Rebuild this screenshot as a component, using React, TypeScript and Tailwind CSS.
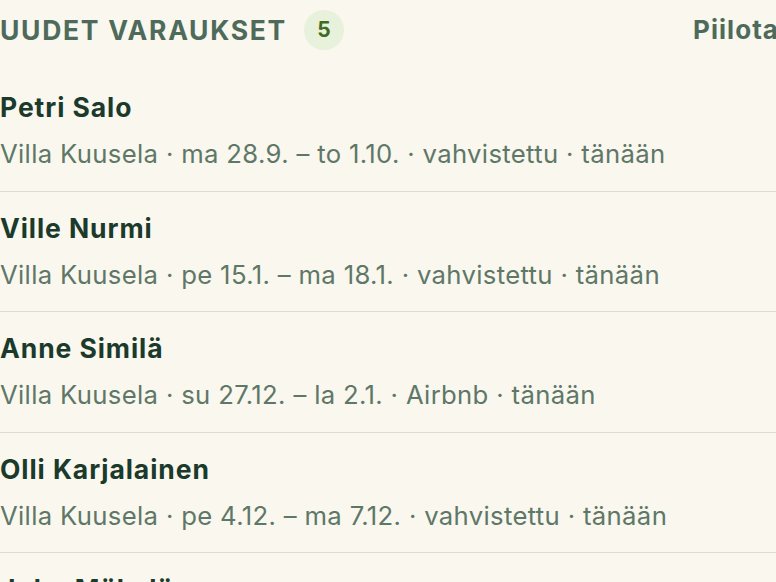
import React from "react";

const rows = [
  { name: "Petri Salo", sub: "Villa Kuusela · ma 28.9. – to 1.10. · vahvistettu · tänään" },
  { name: "Ville Nurmi", sub: "Villa Kuusela · pe 15.1. – ma 18.1. · vahvistettu · tänään" },
  { name: "Anne Similä", sub: "Villa Kuusela · su 27.12. – la 2.1. · Airbnb · tänään" },
  { name: "Olli Karjalainen", sub: "Villa Kuusela · pe 4.12. – ma 7.12. · vahvistettu · tänään" },
  { name: "Juha Mäkelä", sub: "Villa Kuusela · ke 11.11. – su 15.11. · vahvistettu · tänään" },
];

export default function App() {
  return (
    <div className="w-[776px] h-[582px] overflow-hidden bg-[#f9f7ee] font-['Inter',sans-serif]">
      <div className="flex items-center justify-between w-[779px] h-[60px]">
        <div className="flex items-center gap-[17px]">
          <span className="text-[26.5px] font-bold tracking-[0.064em] text-[#4e6a5a] leading-none">UUDET VARAUKSET</span>
          <span className="w-[40px] h-[40px] rounded-full bg-[#e8f1dc] flex items-center justify-center text-[21px] font-bold text-[#3f6b1f]">5</span>
        </div>
        <span className="text-[26px] font-bold tracking-[0.04em] text-[#4e6a5a] leading-none">Piilota</span>
      </div>
      <div className="mt-[11px]">
        {rows.map((r) => (
          <div key={r.name} className="pt-[20px] pb-[21.5px] border-b border-[#dedccf]">
            <div className="text-[26.5px] leading-[32px] font-bold tracking-[0.035em] text-[#1b3a2b]">{r.name}</div>
            <div className="mt-[16px] text-[25.7px] leading-[30px] tracking-[0.013em] text-[#5f7768]">{r.sub}</div>
          </div>
        ))}
      </div>
    </div>
  );
}
